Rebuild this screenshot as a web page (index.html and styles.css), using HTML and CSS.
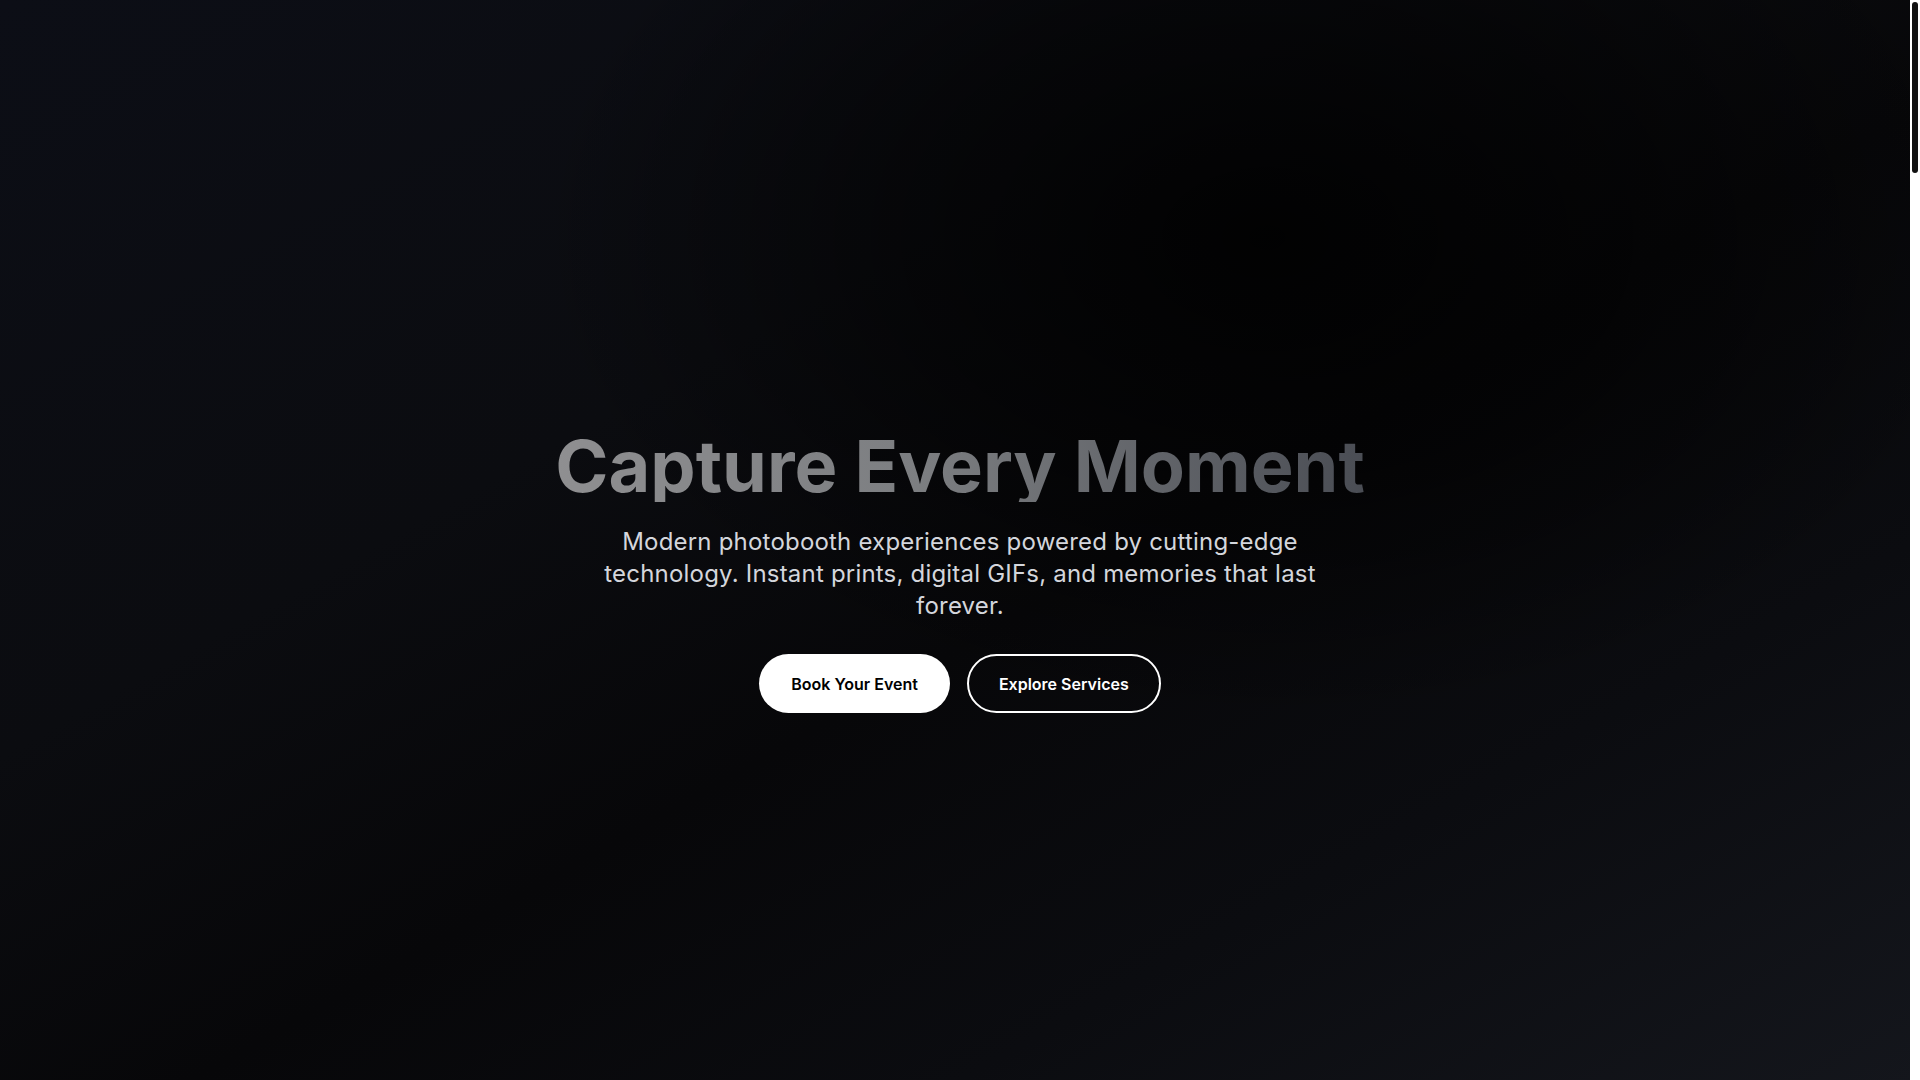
FILE: index.html
```html
<!DOCTYPE html>
<html lang="en">
<head>
<meta charset="utf-8">
<title>Capture Every Moment</title>
<link rel="stylesheet" href="styles.css">
</head>
<body>
<main class="page">
  <section class="hero">
    <div class="hero-inner">
      <h1 class="hero-title">Capture Every Moment</h1>
      <p class="hero-text">Modern photobooth experiences powered by cutting-edge technology. Instant prints, digital GIFs, and memories that last forever.</p>
      <div class="hero-actions">
        <a class="btn btn-primary" href="#book">Book Your Event</a>
        <a class="btn btn-outline" href="#services">Explore Services</a>
      </div>
    </div>
  </section>
</main>
<div class="scroll-rail" aria-hidden="true"><div class="scroll-thumb"></div></div>
</body>
</html>
```

FILE: styles.css
```css
html, body {
  margin: 0;
  padding: 0;
  height: 100%;
  overflow: hidden;
}
body {
  background: #050506;
  font-family: Inter, "Noto Sans", "Liberation Sans", sans-serif;
  color: #ffffff;
}
.page {
  display: flex;
  flex-direction: column;
  height: 100vh;
}
.hero {
  flex: 1;
  box-sizing: border-box;
  padding-top: 63px;
  display: flex;
  align-items: center;
  justify-content: center;
  background:
    radial-gradient(ellipse 38% 45% at 66% 22%, rgba(0,0,0,0.85) 0%, rgba(0,0,0,0.5) 50%, rgba(0,0,0,0) 100%),
    linear-gradient(to bottom right, #0c0e16 0%, #0b0c10 35%, #070709 55%, #0b0c10 75%, #14161c 100%);
}
.hero-inner {
  display: flex;
  flex-direction: column;
  align-items: center;
  text-align: center;
  max-width: 768px;
}
.hero-title {
  margin: 0 0 24px;
  font-size: 72px;
  line-height: 1;
  font-weight: 700;
  white-space: nowrap;
  background: linear-gradient(to right, #8f8f91 0%, #7c7e81 45%, #4a4d54 100%);
  -webkit-background-clip: text;
  background-clip: text;
  color: transparent;
}
.hero-text {
  margin: 0 0 32px;
  font-size: 24px;
  line-height: 32px;
  letter-spacing: 0.2px;
  color: #d4d6dc;
}
.hero-actions {
  display: flex;
  gap: 17px;
}
.btn {
  display: inline-flex;
  align-items: center;
  justify-content: center;
  box-sizing: border-box;
  height: 59px;
  padding: 0 32px;
  border-radius: 9999px;
  font-size: 16px;
  font-weight: 600;
  text-decoration: none;
}
.btn-primary {
  background: #ffffff;
  color: #000000;
}
.btn-outline {
  padding: 0 30px;
  border: 2px solid #ffffff;
  color: #ffffff;
}
.scroll-rail {
  position: fixed;
  top: 0;
  right: 0;
  bottom: 0;
  width: 10px;
  box-sizing: border-box;
  padding: 2px 2px 0;
  background: #ffffff;
}
.scroll-thumb {
  height: 171px;
  background: #111111;
  border-radius: 4px;
}
```
